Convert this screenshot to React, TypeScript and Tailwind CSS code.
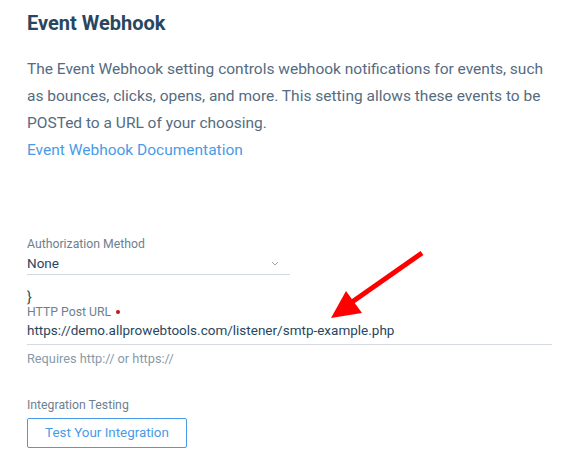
import React from 'react'

const App = () => {
    return (
        <div className="relative w-[571px] h-[465px] bg-white overflow-hidden font-['Roboto','Noto_Sans',sans-serif]">
            <div className="pl-[27px] pr-[20px] pt-[10px]">
                <h2 className="text-[20px] font-bold text-[#294661] leading-[26px]">Event Webhook</h2>
                <p className="mt-[20px] text-[15.5px] leading-[27px] text-[#546b81]">
                    The Event Webhook setting controls webhook notifications for events, such as bounces, clicks, opens, and more. This setting allows these events to be POSTed to a URL of your choosing.
                </p>
                <a className="block text-[15.5px] leading-[26px] text-[#489be8]">Event Webhook Documentation</a>

                <div className="mt-[73px] w-[263px]">
                    <label className="block text-[12.25px] leading-[16px] text-[#6e7f91]">Authorization Method</label>
                    <div className="flex items-center justify-between border-b border-[#d4dadf] h-[23px]">
                        <span className="text-[13.5px] text-[#294661]">None</span>
                        <svg width="8" height="5" viewBox="0 0 8 5" className="mr-[11px]">
                            <path d="M1 1l3 3 3-3" fill="none" stroke="#9aa7b4" strokeWidth="1" />
                        </svg>
                    </div>
                </div>

                <div className="mt-[15px] text-[14px] leading-[14px] text-[#294661]">{'}'}</div>
                <div className="w-[525px]">
                    <label className="flex items-center gap-[5px] text-[12.25px] leading-[16px] text-[#6e7f91]">
                        HTTP Post URL <span className="w-[4px] h-[4px] rounded-full bg-[#c0141b]" />
                    </label>
                    <div className="mt-[1px] pb-[5px] leading-[18px] border-b border-[#d4dadf] text-[13.5px] text-[#294661]">
                        https://demo.allprowebtools.com/listener/smtp-example.php
                    </div>
                    <p className="mt-[7px] text-[12.75px] leading-[14px] text-[#8a99a8]">Requires http:// or https://</p>
                </div>

                <div className="mt-[31px]">
                    <label className="block text-[12.25px] leading-[16px] text-[#6e7f91]">Integration Testing</label>
                    <button className="mt-[5px] w-[160px] h-[30px] border border-[#489be8] rounded-[2px] text-[13.4px] text-[#489be8] bg-white">
                        Test Your Integration
                    </button>
                </div>
            </div>

            <svg className="absolute left-0 top-0" width="571" height="465">
                <line x1="422" y1="253" x2="352" y2="302" stroke="#ff0000" strokeWidth="5" />
                <polygon points="331,318 346,291 362,313" fill="#ff0000" />
            </svg>
        </div>
    )
}

export default App
